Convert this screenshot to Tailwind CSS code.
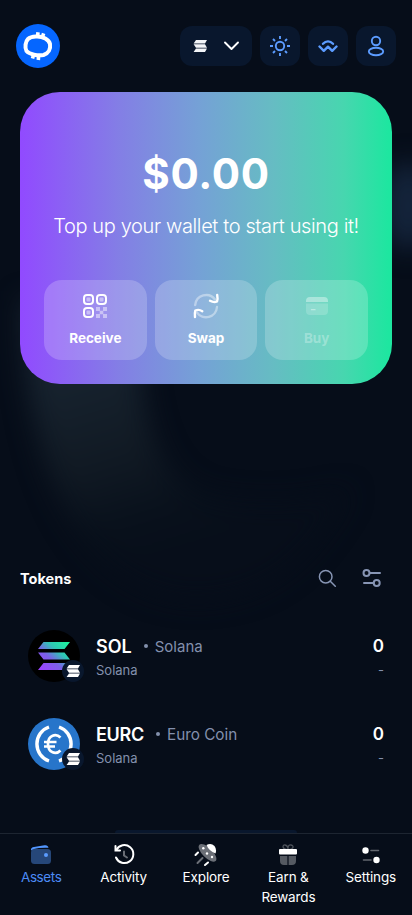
<!DOCTYPE html>
<html lang="en">
<head>
<meta charset="utf-8">
<meta name="viewport" content="width=device-width, initial-scale=1">
<title>Wallet</title>
<script src="https://cdn.jsdelivr.net/npm/@tailwindcss/browser@4"></script>
</head>
<body class="bg-[#060d19]">
<div class="relative isolate flex h-[915px] w-[412px] flex-col overflow-hidden bg-[#060d19] font-['Inter','Liberation_Sans',sans-serif] text-white">
  <!-- ambient glow -->
  <svg class="absolute inset-0 -z-10" width="412" height="915" viewBox="0 0 412 915" fill="none">
    <defs>
      <filter id="soft" x="-40%" y="-40%" width="180%" height="180%" color-interpolation-filters="sRGB"><feGaussianBlur stdDeviation="13"/></filter>
      <linearGradient id="haze" x1="70" y1="370" x2="130" y2="570" gradientUnits="userSpaceOnUse"><stop stop-color="#17232f"/><stop offset=".45" stop-color="#111a24"/><stop offset=".8" stop-color="#08101b"/><stop offset="1" stop-color="#070e1a"/></linearGradient>
    </defs>
    <path d="M22 300H138C138 400 150 480 210 496C280 510 330 495 350 490C310 560 270 600 190 600C80 590 24 470 22 300Z" fill="url(#haze)" filter="url(#soft)"/>
    <ellipse cx="408" cy="206" rx="26" ry="44" fill="#14243b" filter="url(#soft)"/>
  </svg>

  <header class="flex h-[92px] shrink-0 items-center justify-between px-4">
    <svg width="44" height="44" viewBox="0 0 44 44" fill="none">
      <circle cx="22" cy="22" r="22" fill="#0566ff"/>
      <path d="M20.500 12.500C27 12.300 33 15.500 34 20C34.800 25 32.500 29.500 27.500 31C22 32 13.500 30.500 10.500 27C8.500 23.500 9.500 17.500 12 15C14.500 12.700 17 12.700 20.500 12.500Z" stroke="#fff" stroke-width="4"/>
      <path d="M22 8.200L21.600 12M27.600 9.400L26.500 13M16.500 34.600L17.500 31M22.300 36L22.600 32" stroke="#fff" stroke-width="3.600"/>
    </svg>
    <div class="flex gap-2">
      <button class="flex h-10 w-[72px] items-center justify-between rounded-xl bg-[#09172d] pr-3 pl-[13px]">
        <svg width="14" height="12" viewBox="0 0 14 12" fill="#f2f4f7"><path d="M3 0h11l-2 3.500H.6zM.6 4.300H12l2 3.500H3zM3 8.500h11l-2 3.500H.6z"/></svg>
        <svg width="17" height="10" viewBox="0 0 17 10" fill="none" stroke="#fff" stroke-width="1.900" stroke-linecap="round" stroke-linejoin="round"><path d="M2 1.500L8.500 8L15 1.500"/></svg>
      </button>
      <button class="grid size-10 place-items-center rounded-xl bg-[#09172d]">
        <svg width="20" height="20" viewBox="0 0 20 20" fill="none" stroke="#5c9cff" stroke-width="1.900"><circle cx="10" cy="10" r="4.200"/><path d="M10 0v3M10 17v3M0 10h3M17 10h3M3 3l2 2M15 15l2 2M3 17l2-2M15 5l2-2"/></svg>
      </button>
      <button class="grid size-10 place-items-center rounded-xl bg-[#09172d]">
        <svg width="20" height="14" viewBox="0 0 20 14" fill="none" stroke="#5c9cff" stroke-width="2.400" stroke-linecap="round" stroke-linejoin="round"><path d="M1.500 7.500L5.800 11.800L10 7.700L14.200 11.800L18.500 7.500"/><path d="M5 4.800C8 1.500 12 1.500 15 4.800"/></svg>
      </button>
      <button class="grid size-10 place-items-center rounded-xl bg-[#09172d]">
        <svg width="18" height="22" viewBox="0 0 18 22" fill="none" stroke="#5c9cff" stroke-width="1.900"><circle cx="9" cy="6" r="4.200"/><ellipse cx="9" cy="16.500" rx="7.200" ry="3.700"/></svg>
      </button>
    </div>
  </header>

  <section class="mx-5 flex h-[292px] shrink-0 flex-col items-center rounded-[40px] bg-[linear-gradient(90deg,#914aff_0%,#837fe5_27%,#75a1d6_48%,#66bcc3_68%,#47d6af_87%,#1ee6a0_99%)] px-6 pt-[56px]">
    <h1 class="h-[52px] text-[42px] leading-[52px] font-bold tracking-[0.7px]">$0.00</h1>
    <p class="mt-3 h-7 text-[20px] leading-7 font-light whitespace-nowrap tracking-[-0.37px]">Top up your wallet to start using it!</p>
    <div class="mt-10 grid h-20 w-full grid-cols-3 gap-2 text-[13.5px] leading-5 font-bold">
      <button class="flex flex-col items-center rounded-[18px] bg-white/20 pt-3">
        <svg width="28" height="28" viewBox="0 0 28 28" fill="none">
          <g stroke="#fff" stroke-width="2"><rect x="3" y="3" width="9" height="9" rx="3"/><rect x="16" y="3" width="9" height="9" rx="3"/><rect x="3" y="16" width="9" height="9" rx="3"/></g>
          <g fill="#fff" opacity=".45"><rect x="5.500" y="5.500" width="4" height="4" rx="1"/><rect x="18.500" y="5.500" width="4" height="4" rx="1"/><rect x="5.500" y="18.500" width="4" height="4" rx="1"/><path d="M15 15h4v4h-4zM22 15h4v4h-4zM18.700 18.700h3.600v3.600h-3.600zM15 22h4v4h-4zM22 22h4v4h-4z"/></g>
        </svg>
        <span class="mt-2">Receive</span>
      </button>
      <button class="flex flex-col items-center rounded-[18px] bg-white/20 pt-3">
        <svg width="28" height="28" viewBox="0 0 28 28" fill="none" stroke="#fff" stroke-width="2.400" stroke-linecap="round" stroke-linejoin="round"><path d="M3.200 13A11 11 0 0 1 23 7.500M25 15A11 11 0 0 1 5 20.500" opacity=".4"/><path d="M25.200 3Q26 7 25 9.500Q22 11 18 8.800M3 25Q2.500 21 3.300 18.500Q7 17 10.300 19.200"/></svg>
        <span class="mt-2">Swap</span>
      </button>
      <button class="flex flex-col items-center rounded-[18px] bg-white/20 pt-3 text-white/30">
        <svg width="28" height="28" viewBox="0 0 28 28"><path d="M3 10V9Q3 5 7 5H21Q25 5 25 9V10Z" fill="#fff" opacity=".38"/><path d="M3 11.500H25V19Q25 23 21 23H7Q3 23 3 19Z" fill="#fff" opacity=".18"/><path d="M8.500 17.700H12" stroke="#fff" stroke-width="1.300" stroke-linecap="round" opacity=".4"/></svg>
        <span class="mt-2">Buy</span>
      </button>
    </div>
  </section>

  <main class="flex flex-1 flex-col pt-[178px]">
    <div class="flex h-8 items-center justify-between pr-[30px] pl-5">
      <h2 class="pt-0.5 text-[14.5px] leading-6 font-bold">Tokens</h2>
      <div class="flex items-center gap-[25px] text-[#8795b4]">
        <svg width="20" height="20" viewBox="0 0 20 20" fill="none" stroke="currentColor" stroke-width="1.500" stroke-linecap="round"><circle cx="8.700" cy="8.700" r="6.300"/><path d="M13.300 13.300L18.300 18.300"/></svg>
        <svg width="20" height="20" viewBox="0 0 20 20" fill="none" stroke="currentColor" stroke-width="2" stroke-linecap="round"><circle cx="4.500" cy="5" r="3"/><path d="M8 5H18M2 15H11.500"/><circle cx="14.700" cy="15" r="3"/></svg>
      </div>
    </div>
    <ul class="mt-[18px] px-7">
      <li class="flex h-[88px] items-center">
        <div class="relative size-[52px]">
          <svg width="52" height="52" viewBox="0 0 52 52"><defs><linearGradient id="sol" x1="12" y1="42" x2="40" y2="10" gradientUnits="userSpaceOnUse"><stop offset=".1" stop-color="#9945ff"/><stop offset=".4" stop-color="#7b60e8"/><stop offset=".65" stop-color="#30c5b5"/><stop offset="1" stop-color="#19fb9b"/></linearGradient></defs><circle cx="26" cy="26" r="26"/><path fill="url(#sol)" d="M15.500 12H42L36.500 19H10zM10 22.500H36.500L42 29.500H15.500zM15.500 33H42L36.500 40H10z"/></svg>
          <span class="absolute top-[30px] left-[34px] grid size-[22px] place-items-center rounded-full bg-[#09172d]"><svg width="14" height="12" viewBox="0 0 14 12" fill="#fff"><path d="M3 0h11l-2 3.400H.6zM.6 4.300H12l2 3.400H3zM3 8.600h11l-2 3.400H.6z"/></svg></span>
        </div>
        <div class="ml-4 flex-1 pt-1">
          <div class="flex h-6 items-center"><b class="text-[18px] font-semibold">SOL</b><i class="mr-[7px] ml-3 size-1 rounded-full bg-[#8390ad]"></i><span class="pt-0.5 text-[15px] text-[#8390ad]">Solana</span></div>
          <div class="h-6 text-[13px] leading-6 text-[#8390ad]">Solana</div>
        </div>
        <div class="pt-1 text-right"><div class="h-6 text-[17px] leading-6 font-semibold">0</div><div class="h-6 text-[13px] leading-6 text-[#8390ad]">-</div></div>
      </li>
      <li class="flex h-[88px] items-center">
        <div class="relative size-[52px]">
          <svg width="52" height="52" viewBox="0 0 52 52" fill="none"><circle cx="26" cy="26" r="26" fill="#2775ca"/><g stroke="#fff" stroke-width="3.400"><path d="M21 9A18 18 0 0 0 21 43M31 9A18 18 0 0 1 31 43"/><path d="M32.500 19.500C28 15 20 17 20 26C20 35 28 37 32.500 32.500M16 24H28.500M16 28.500H27" stroke-width="2.700"/></g></svg>
          <span class="absolute top-[30px] left-[34px] grid size-[22px] place-items-center rounded-full bg-[#09172d]"><svg width="14" height="12" viewBox="0 0 14 12" fill="#fff"><path d="M3 0h11l-2 3.400H.6zM.6 4.300H12l2 3.400H3zM3 8.600h11l-2 3.400H.6z"/></svg></span>
        </div>
        <div class="ml-4 flex-1 pt-1">
          <div class="flex h-6 items-center"><b class="text-[18px] font-semibold tracking-[-0.3px]">EURC</b><i class="mr-[7px] ml-3 size-1 rounded-full bg-[#8390ad]"></i><span class="pt-0.5 text-[15.300px] text-[#8390ad]">Euro Coin</span></div>
          <div class="h-6 text-[13px] leading-6 text-[#8390ad]">Solana</div>
        </div>
        <div class="pt-1 text-right"><div class="h-6 text-[17px] leading-6 font-semibold">0</div><div class="h-6 text-[13px] leading-6 text-[#8390ad]">-</div></div>
      </li>
    </ul>
    <div class="mx-auto mt-auto h-[3px] w-[182px] rounded-t-full bg-[#09172d]"></div>
  </main>

  <nav class="grid h-[82px] shrink-0 grid-cols-5 border-t border-[#1d2531] bg-[#060d19] pt-[9px] text-center text-[13.5px] leading-5 tracking-[-0.15px]">
    <a class="flex flex-col items-center text-[#4c8bf5]">
      <svg width="24" height="24" viewBox="0 0 24 24"><rect x="2" y="6" width="20" height="15" rx="3.500" fill="#264779"/><path d="M2 6.500Q2 4.500 5 4L15.500 2.200Q19 1.700 19.500 4.800Q10 4.500 5 6Q3 6.700 2 7.500Z" fill="#5296ff"/><circle cx="17" cy="12" r="2" fill="#5c9cff"/></svg>
      <span class="tracking-[-0.4px]">Assets</span></a>
    <a class="flex flex-col items-center">
      <svg width="24" height="24" viewBox="0 0 24 24" fill="none" stroke="#fff" stroke-width="2" stroke-linecap="round"><path d="M4.300 7A9 9 0 1 1 4 14.500"/><path d="M3.500 3V7.500H8"/><path d="M12 8.500V12.500L15 14.500" opacity=".4"/></svg>
      <span>Activity</span></a>
    <a class="flex flex-col items-center">
      <svg width="24" height="24" viewBox="0 0 24 24" fill="none"><ellipse cx="13.500" cy="9.800" rx="11.500" ry="5" transform="rotate(45 13.500 9.800)" fill="#6b6f77"/><path d="M12.500 2Q17 -.5 20.500 3Q23 6.500 21.500 10.500Q15 8 12.500 2Z" fill="#fff"/><g fill="#fff"><circle cx="9.300" cy="5.200" r="1.200"/><circle cx="13" cy="10.500" r="1.200"/><circle cx="18" cy="14" r="1.200"/></g><path d="M1.500 12L4 9.500M11 22L14 19.500" stroke="#fff" stroke-width="2" stroke-linecap="round"/><path d="M3.500 20L8.500 15" stroke="#6b6f77" stroke-width="2" stroke-linecap="round"/></svg>
      <span>Explore</span></a>
    <a class="flex flex-col items-center">
      <svg width="24" height="24" viewBox="0 0 24 24" fill="none"><path d="M12 6.500C6 7 6 1.500 9 2Q12 2.500 12 6.500C12 2.500 13 1.800 15 2C18.500 2.500 17.500 7 12 6.500Z" stroke="#4c5159" stroke-width="1.300"/><rect x="3" y="6" width="18" height="5.500" rx="1" fill="#fff"/><path d="M4 13H11.400V22H8Q4 22 4 18ZM12.600 13H20V18Q20 22 16 22H12.600Z" fill="#555a62"/></svg>
      <span>Earn &amp;<br>Rewards</span></a>
    <a class="flex flex-col items-center">
      <svg width="24" height="24" viewBox="0 0 24 24" fill="none"><path d="M12 7.500H19.500M4.500 17H12" stroke="#63676f" stroke-width="1.600" stroke-linecap="round"/><circle cx="6.500" cy="7.500" r="3.200" fill="#fff"/><circle cx="17.500" cy="17" r="3.200" fill="#fff"/></svg>
      <span>Settings</span></a>
  </nav>
</div>
</body>
</html>
